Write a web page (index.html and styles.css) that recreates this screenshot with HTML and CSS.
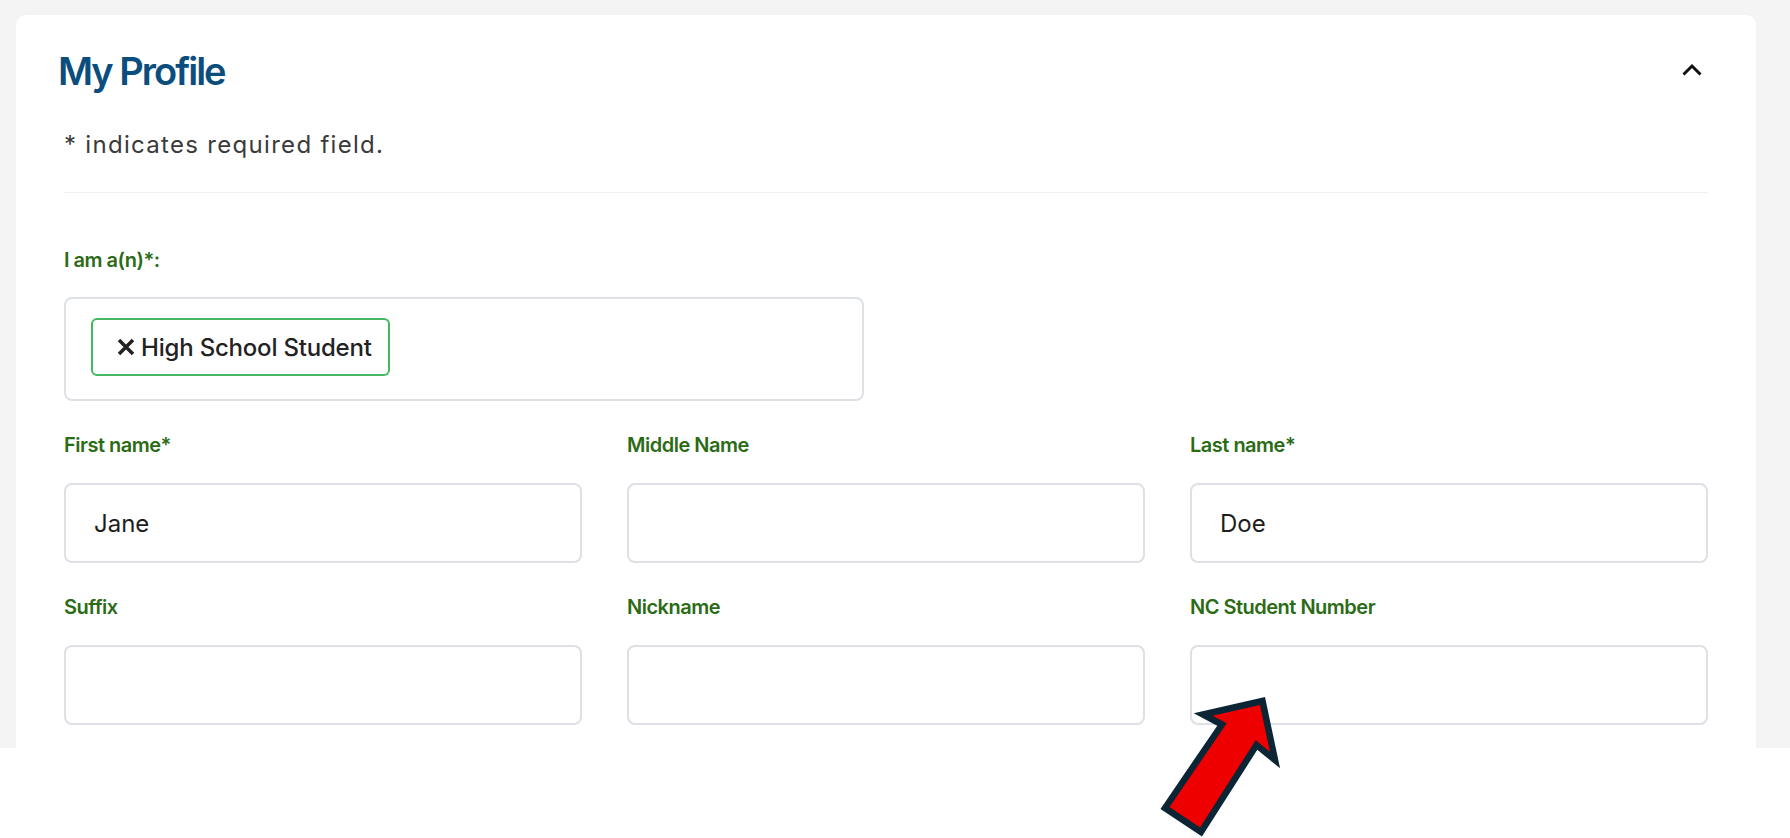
FILE: index.html
```html
<!DOCTYPE html>
<html lang="en">
<head>
<meta charset="utf-8">
<title>My Profile</title>
<link rel="stylesheet" href="styles.css">
</head>
<body>
<div class="page">
  <section class="card">
    <header class="card-head">
      <h1>My Profile</h1>
      <svg class="chev" width="24" height="24" viewBox="0 0 24 24" aria-hidden="true"><polyline points="3.5,15.5 12,7 20.5,15.5" fill="none" stroke="#111" stroke-width="3"/></svg>
    </header>
    <div class="intro">
      <p>* indicates required field.</p>
    </div>
    <form class="form">
      <div class="field field-type">
        <label>I am a(n)*:</label>
        <div class="type-box">
          <span class="chip">
            <svg class="chip-x" width="18" height="18" viewBox="0 0 18 18" aria-hidden="true"><path d="M2 2 L16 16 M16 2 L2 16" stroke="#222" stroke-width="3.5" fill="none"/></svg>
            <span class="chip-text">High School Student</span>
          </span>
        </div>
      </div>
      <div class="grid">
        <div class="field">
          <label>First name*</label>
          <input class="input" type="text" value="Jane">
        </div>
        <div class="field">
          <label>Middle Name</label>
          <input class="input" type="text" value="">
        </div>
        <div class="field">
          <label>Last name*</label>
          <input class="input" type="text" value="Doe">
        </div>
        <div class="field">
          <label>Suffix</label>
          <input class="input" type="text" value="">
        </div>
        <div class="field">
          <label>Nickname</label>
          <input class="input" type="text" value="">
        </div>
        <div class="field">
          <label>NC Student Number</label>
          <input class="input" type="text" value="">
        </div>
      </div>
    </form>
  </section>
</div>
<svg class="arrow" width="140" height="148" viewBox="0 0 140 148" aria-hidden="true">
  <polygon points="112.5,11 53,24.5 72,34.5 15,118 51,142 106.5,55 125,70" fill="#ee0000" stroke="#0b2535" stroke-width="6.5" stroke-linejoin="miter" stroke-miterlimit="10"/>
</svg>
</body>
</html>
```

FILE: styles.css
```css
html, body {
  margin: 0;
  padding: 0;
}

body {
  background: #ffffff;
  font-family: Inter, "Liberation Sans", sans-serif;
  height: 838px;
  overflow: hidden;
  position: relative;
}

.page {
  background: #f4f4f4;
  height: 748px;
  box-sizing: border-box;
  padding: 15px 34px 0 16px;
  overflow: hidden;
}

.card {
  background: #ffffff;
  border-radius: 10px 10px 0 0;
  height: 733px;
  box-sizing: border-box;
  padding: 32px 48px 0;
}

.card-head {
  display: flex;
  justify-content: space-between;
  align-items: center;
  height: 48px;
  margin-left: -6px;
}

.card-head h1 {
  margin: 0;
  font-size: 38px;
  line-height: 48px;
  font-weight: 600;
  color: #0b4e7d;
  letter-spacing: -2px;
}

.chev {
  margin-right: 4px;
  display: block;
}

.intro {
  margin-top: 34px;
  padding-bottom: 31px;
  border-bottom: 1px solid #f0f0f0;
}

.intro p {
  margin: 0;
  font-size: 24px;
  line-height: 32px;
  letter-spacing: 1.3px;
  color: #3a3a3a;
}

.form {
  margin-top: 53px;
  display: flex;
  flex-direction: column;
  gap: 30px;
}

.field label {
  display: block;
  font-size: 20px;
  line-height: 28px;
  font-weight: 600;
  color: #2c6b16;
  letter-spacing: -0.5px;
  margin-bottom: 24px;
}

.field-type label {
  margin-bottom: 23px;
}

.type-box {
  width: calc((100% - 45px) / 2);
  height: 104px;
  box-sizing: border-box;
  border: 2px solid #dde1e6;
  border-radius: 8px;
  padding: 19px 25px 0;
}

.chip {
  display: inline-flex;
  align-items: center;
  height: 58px;
  box-sizing: border-box;
  border: 2px solid #45b864;
  border-radius: 6px;
  padding: 0 16px 0 24px;
  gap: 6px;
}

.chip-x {
  display: block;
}

.chip-text {
  font-size: 24px;
  font-weight: 500;
  color: #222222;
  letter-spacing: -0.2px;
}

.grid {
  display: grid;
  grid-template-columns: repeat(3, 1fr);
  column-gap: 45px;
  row-gap: 30px;
}

.input {
  display: block;
  width: 100%;
  height: 80px;
  box-sizing: border-box;
  border: 2px solid #dde1e6;
  border-radius: 8px;
  padding: 0 28px;
  font-family: inherit;
  font-size: 24px;
  color: #1d1d1d;
  background: #ffffff;
  outline: none;
}

.arrow {
  position: absolute;
  left: 1150px;
  top: 690px;
}
```
